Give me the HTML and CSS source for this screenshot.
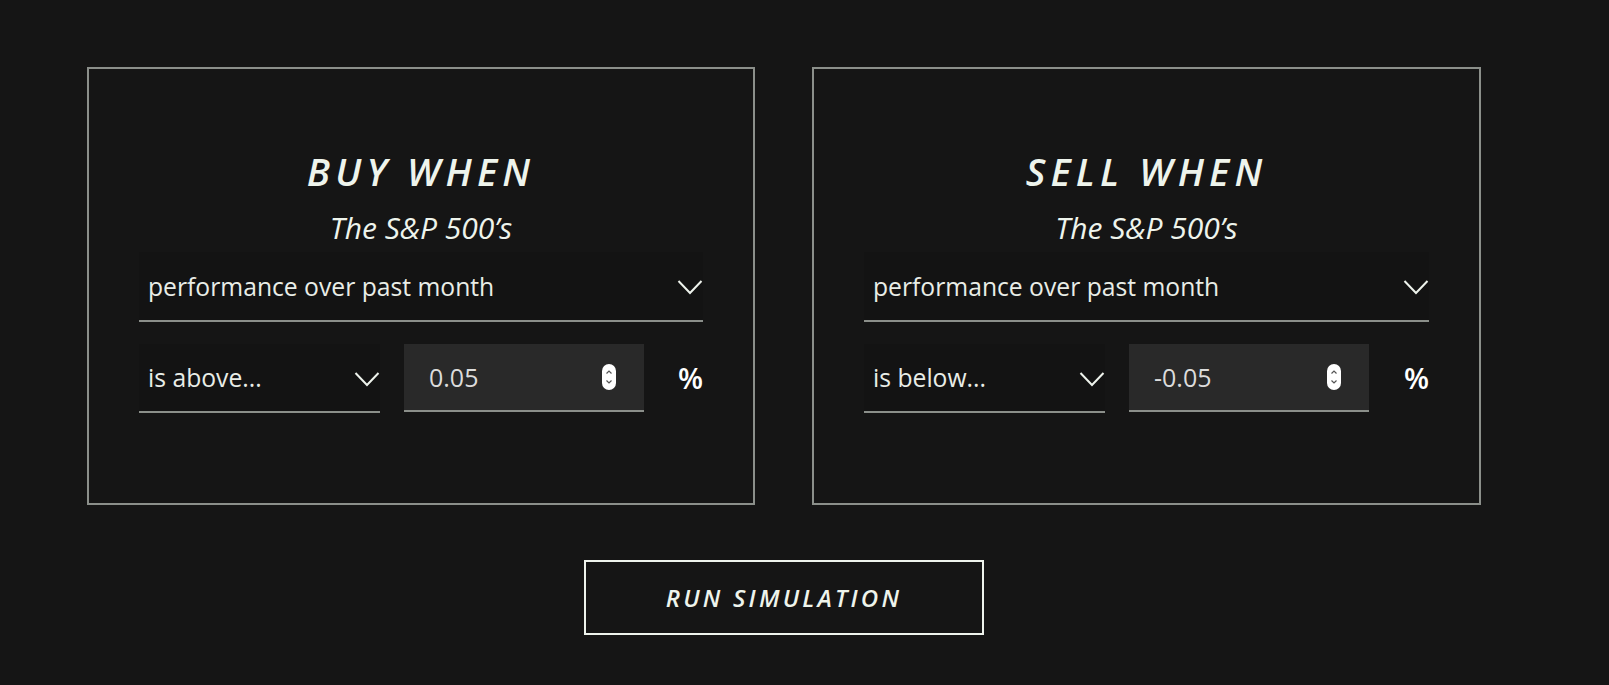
FILE: index.html
```html
<!DOCTYPE html>
<html lang="en">
<head>
<meta charset="utf-8">
<title>Simulation</title>
<link rel="stylesheet" href="styles.css">
</head>
<body>
<main class="page">
  <div class="wrap">
    <div class="cards">
      <section class="card">
        <h2 class="card-title">BUY WHEN</h2>
        <p class="card-sub">The S&amp;P 500’s</p>
        <div class="select select-wide">
          <span>performance over past month</span>
          <svg class="chev" width="26" height="16" viewBox="0 0 26 16"><path d="M1.5 2 L13 14 L24.5 2" fill="none" stroke="#eef3ec" stroke-width="2"/></svg>
        </div>
        <div class="row">
          <div class="select select-small">
            <span>is above...</span>
            <svg class="chev" width="26" height="16" viewBox="0 0 26 16"><path d="M1.5 2 L13 14 L24.5 2" fill="none" stroke="#eef3ec" stroke-width="2"/></svg>
          </div>
          <div class="num">
            <span>0.05</span>
            <svg class="spin" width="14" height="26" viewBox="0 0 14 26"><rect x="0" y="0" width="14" height="26" rx="7" fill="#ffffff"/><path d="M4.5 9.5 L7 7 L9.5 9.5" fill="none" stroke="#555" stroke-width="1.2"/><path d="M4.5 16.5 L7 19 L9.5 16.5" fill="none" stroke="#555" stroke-width="1.2"/></svg>
          </div>
          <span class="pct">%</span>
        </div>
      </section>
      <section class="card">
        <h2 class="card-title">SELL WHEN</h2>
        <p class="card-sub">The S&amp;P 500’s</p>
        <div class="select select-wide">
          <span>performance over past month</span>
          <svg class="chev" width="26" height="16" viewBox="0 0 26 16"><path d="M1.5 2 L13 14 L24.5 2" fill="none" stroke="#eef3ec" stroke-width="2"/></svg>
        </div>
        <div class="row">
          <div class="select select-small">
            <span>is below...</span>
            <svg class="chev" width="26" height="16" viewBox="0 0 26 16"><path d="M1.5 2 L13 14 L24.5 2" fill="none" stroke="#eef3ec" stroke-width="2"/></svg>
          </div>
          <div class="num">
            <span>-0.05</span>
            <svg class="spin" width="14" height="26" viewBox="0 0 14 26"><rect x="0" y="0" width="14" height="26" rx="7" fill="#ffffff"/><path d="M4.5 9.5 L7 7 L9.5 9.5" fill="none" stroke="#555" stroke-width="1.2"/><path d="M4.5 16.5 L7 19 L9.5 16.5" fill="none" stroke="#555" stroke-width="1.2"/></svg>
          </div>
          <span class="pct">%</span>
        </div>
      </section>
    </div>
    <div class="actions">
      <button class="run">RUN SIMULATION</button>
    </div>
  </div>
</main>
</body>
</html>
```
FILE: styles.css
```css
* { box-sizing: border-box; }
html, body {
  margin: 0;
  background: #151515;
  color: #eef3ec;
  font-family: "Open Sans", "Liberation Sans", sans-serif;
}
.page {
  padding: 67px 0 0 87px;
  height: 685px;
  overflow: hidden;
}
.wrap { width: 1394px; }
.cards {
  display: flex;
  gap: 57px;
}
.card {
  width: 668px;
  height: 438px;
  border: 2px solid #8b8f8a;
  padding: 79px 50px 0;
}
.card:last-child { width: 669px; }
.card-title {
  margin: 0;
  text-align: center;
  font-style: italic;
  font-weight: 600;
  font-size: 38px;
  line-height: 46px;
  letter-spacing: 5.2px;
  color: #eef4ec;
}
.card-sub {
  margin: 15px 0 0;
  text-align: center;
  font-style: italic;
  font-weight: 500;
  font-size: 30px;
  line-height: 38px;
  color: #eef4ec;
}
.select {
  display: flex;
  align-items: center;
  justify-content: space-between;
  background: #131313;
  border-bottom: 2px solid #8b8f8a;
  padding-left: 9px;
  font-size: 24.7px;
  color: #e9ede7;
}
.select-wide {
  height: 70px;
  margin-top: 5px;
}
.row {
  display: flex;
  align-items: flex-start;
  margin-top: 22px;
}
.select-small {
  width: 241px;
  height: 69px;
  margin-top: 0;
}
.chev { display: block; margin-top: 2px; }
.num {
  width: 240px;
  height: 68px;
  margin-left: 24px;
  background: #292929;
  border-bottom: 2px solid #8b8f8a;
  display: flex;
  align-items: center;
  justify-content: space-between;
  padding: 0 28px 0 25px;
  font-size: 25px;
  color: #dcdcdc;
}
.spin { display: block; }
.pct {
  flex: 1;
  text-align: right;
  font-size: 29px;
  font-weight: 600;
  line-height: 68px;
  color: #ffffff;
}
.actions {
  display: flex;
  justify-content: center;
  margin-top: 55px;
}
.run {
  width: 400px;
  height: 75px;
  background: #151515;
  border: 2px solid #eef3ec;
  color: #eef4ec;
  font-family: "Open Sans", "Liberation Sans", sans-serif;
  font-style: italic;
  font-weight: 600;
  font-size: 24px;
  letter-spacing: 3.2px;
  padding: 0;
}
```
